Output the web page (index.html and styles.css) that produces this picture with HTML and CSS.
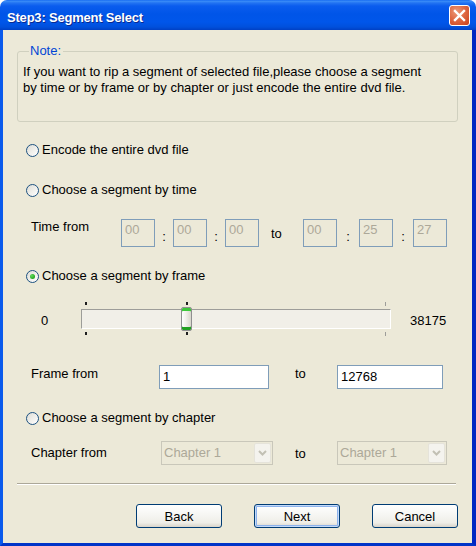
FILE: index.html
```html
<!DOCTYPE html>
<html>
<head>
<meta charset="utf-8">
<link rel="stylesheet" href="styles.css">
</head>
<body>
<div class="window">
  <div class="titlebar">
    <span class="title">Step3: Segment Select</span>
    <span class="close">
      <svg width="21" height="21" viewBox="0 0 21 21"><path d="M6 6 L15 15 M15 6 L6 15" stroke="#fff" stroke-width="2.4" stroke-linecap="square"/></svg>
    </span>
  </div>
  <div class="frame">
    <div class="content">
      <fieldset class="note">
        <legend>Note:</legend>
        <p>If you want to rip a segment of selected file,please choose a segment<br>by time or by frame or by chapter or just encode the entire dvd file.</p>
      </fieldset>

      <label class="radio r1"><span class="circle"></span>Encode the entire dvd file</label>
      <label class="radio r2"><span class="circle"></span>Choose a segment by time</label>

      <div class="time-row">
        <span class="lbl lbl-time">Time from</span>
        <span class="tbox">00</span><span class="colon c1">:</span>
        <span class="tbox">00</span><span class="colon c2">:</span>
        <span class="tbox">00</span><span class="to to-time">to</span>
        <span class="tbox">00</span><span class="colon c3">:</span>
        <span class="tbox">25</span><span class="colon c4">:</span>
        <span class="tbox">27</span>
      </div>

      <label class="radio r3"><span class="circle checked"></span>Choose a segment by frame</label>

      <div class="slider-row">
        <span class="min">0</span>
        <div class="slider">
          <div class="track"></div>
          <span class="tick dark top" style="left:4px"></span>
          <span class="tick dark bottom" style="left:4px"></span>
          <span class="tick dark top" style="left:105px"></span>
          <span class="tick dark bottom" style="left:105px"></span>
          <span class="tick gray top" style="left:304px"></span>
          <span class="tick gray bottom" style="left:304px"></span>
          <div class="thumb"></div>
        </div>
        <span class="max">38175</span>
      </div>

      <div class="frame-row">
        <span class="lbl lbl-frame">Frame from</span>
        <span class="input in1">1</span>
        <span class="to to-frame">to</span>
        <span class="input in2">12768</span>
      </div>

      <label class="radio r4"><span class="circle"></span>Choose a segment by chapter</label>

      <div class="chapter-row">
        <span class="lbl lbl-chapter">Chapter from</span>
        <span class="select s1"><span class="sel-text">Chapter 1</span><span class="arrow"><svg width="9" height="6" viewBox="0 0 9 6"><path d="M1 1 L4.5 4.5 L8 1" fill="none" stroke="#C2C0B4" stroke-width="2"/></svg></span></span>
        <span class="to to-chapter">to</span>
        <span class="select s2"><span class="sel-text">Chapter 1</span><span class="arrow"><svg width="9" height="6" viewBox="0 0 9 6"><path d="M1 1 L4.5 4.5 L8 1" fill="none" stroke="#C2C0B4" stroke-width="2"/></svg></span></span>
      </div>

      <div class="separator"></div>

      <div class="buttons">
        <button class="btn">Back</button>
        <button class="btn default">Next</button>
        <button class="btn">Cancel</button>
      </div>
    </div>
  </div>
</div>
</body>
</html>
```

FILE: styles.css
```css
html, body {
  margin: 0;
  padding: 0;
}
body {
  width: 476px;
  height: 546px;
  overflow: hidden;
  background: #ffffff;
  font-family: "Liberation Sans", Arial, sans-serif;
  font-size: 13px;
  color: #000;
}
.window {
  width: 476px;
  height: 546px;
  display: flex;
  flex-direction: column;
}
.titlebar {
  height: 30px;
  flex: none;
  display: flex;
  align-items: flex-start;
  justify-content: space-between;
  padding: 0 6px 0 7px;
  box-sizing: border-box;
  border-radius: 7px 7px 0 0;
  background: linear-gradient(to bottom, #0A5FEF 0px, #3D8FF8 1px, #2273F2 3px, #0A5CEE 6px, #0055E8 14px, #0056EA 22px, #0050DC 27px, #0040C4 30px);
}
.title {
  margin-top: 10px;
  line-height: 16px;
  color: #fff;
  font-weight: bold;
  font-size: 13px;
  letter-spacing: -0.2px;
  text-shadow: 1px 1px 0 #0A2A8F;
}
.close {
  margin-top: 5px;
  width: 21px;
  height: 21px;
  box-sizing: border-box;
  border: 1px solid #fff;
  border-radius: 3px;
  background: radial-gradient(circle at 35% 30%, #EC9A7A 0%, #DF6A45 45%, #C9401A 100%);
  display: flex;
}
.close svg {
  margin: -1px;
}
.frame {
  flex: 1;
  border-left: 3px solid #0A5AEC;
  border-right: 4px solid #0026C2;
  border-bottom: 3px solid #0034C8;
  background: #ECE9D8;
}
.content {
  display: flex;
  flex-direction: column;
  padding: 0 14px;
}

/* Note group */
.note {
  margin: 14px 0 0 0;
  padding: 6px 0 25px 5px;
  border: 1px solid #D0D0BF;
  border-radius: 3px;
  min-width: 0;
}
.note legend {
  margin-left: 6px;
  padding: 0 2px 0 1px;
  line-height: 14px;
  color: #0046D5;
}
.note p {
  margin: 0;
  line-height: 16px;
}

/* Radios */
.radio {
  display: flex;
  align-items: center;
  height: 20px;
  line-height: 16px;
  padding-left: 9px;
}
.r1 { margin-top: 18px; }
.r2 { margin-top: 20px; }
.r3 { margin-top: 19px; }
.r4 { margin-top: 19px; }
.circle {
  width: 13px;
  height: 13px;
  box-sizing: border-box;
  border: 1px solid #1C5180;
  border-radius: 50%;
  margin-right: 3px;
  background: linear-gradient(135deg, #DCDCD6 0%, #EEEDE8 45%, #FFFFFF 100%);
  display: flex;
  align-items: center;
  justify-content: center;
}
.circle.checked::after {
  content: "";
  width: 5px;
  height: 5px;
  border-radius: 50%;
  background: radial-gradient(circle at 35% 35%, #62D95E 0%, #2BAF28 60%, #1E8C1E 100%);
}

/* Labels */
.lbl {
  line-height: 16px;
  flex: none;
}
.to {
  line-height: 16px;
  flex: none;
  box-sizing: border-box;
}

/* Time row */
.time-row {
  display: flex;
  align-items: flex-start;
  height: 28px;
  margin-top: 19px;
  padding-left: 14px;
}
.lbl-time { width: 90px; }
.tbox {
  width: 34px;
  height: 28px;
  box-sizing: border-box;
  border: 1px solid #7F9DB9;
  padding: 2px 0 0 3px;
  line-height: 16px;
  color: #ACA899;
  flex: none;
}
.colon {
  line-height: 16px;
  margin-top: 10px;
  text-align: center;
  flex: none;
}
.c1 { width: 18px; }
.c2 { width: 18px; }
.c3 { width: 22px; }
.c4 { width: 20px; }
.to-time {
  width: 44px;
  padding-left: 12px;
  margin-top: 7px;
}

/* Slider */
.slider-row {
  display: flex;
  align-items: flex-start;
  height: 35px;
  margin-top: 15px;
  padding-left: 24px;
}
.min {
  width: 40px;
  line-height: 16px;
  margin-top: 12px;
  flex: none;
}
.max {
  margin-left: 19px;
  line-height: 16px;
  margin-top: 12px;
}
.slider {
  position: relative;
  width: 310px;
  height: 35px;
  flex: none;
}
.track {
  margin-top: 8px;
  height: 20px;
  box-sizing: border-box;
  border-top: 1px solid #9D9D99;
  border-left: 1px solid #9D9D99;
  border-bottom: 1px solid #FFFFFF;
  border-right: 1px solid #FFFFFF;
  background: #F1EFE8;
}
.tick {
  position: absolute;
  width: 2px;
  height: 3px;
}
.tick.top { top: 1px; }
.tick.bottom { top: 31px; }
.tick.dark { background: #1E1E1E; }
.tick.gray { width: 1px; height: 4px; background: #9D9D99; }
.tick.gray.top { top: 1px; }
.thumb {
  position: absolute;
  left: 100px;
  top: 6px;
  width: 11px;
  height: 24px;
  box-sizing: border-box;
  border: 1px solid #8E8F8F;
  border-radius: 2px;
  background: linear-gradient(to right, #FFFFFF 0%, #F3F2EC 40%, #D8D6CC 100%);
  box-shadow: inset 0 3px 0 #3DC93A, inset 0 -3px 0 #21A121;
}

/* Frame row */
.frame-row {
  display: flex;
  align-items: flex-start;
  height: 24px;
  margin-top: 29px;
  padding-left: 14px;
}
.lbl-frame { width: 128px; margin-top: 1px; }
.input {
  height: 24px;
  box-sizing: border-box;
  border: 1px solid #7F9DB9;
  background: #fff;
  padding: 3px 0 0 3px;
  line-height: 16px;
  flex: none;
}
.in1 { width: 110px; }
.in2 { width: 106px; }
.to-frame {
  width: 68px;
  padding-left: 26px;
  margin-top: 1px;
}

/* Chapter row */
.chapter-row {
  display: flex;
  align-items: flex-start;
  height: 24px;
  margin-top: 13px;
  padding-left: 14px;
}
.lbl-chapter { width: 130px; margin-top: 4px; }
.select {
  height: 24px;
  box-sizing: border-box;
  border: 1px solid #C9C7BA;
  display: flex;
  align-items: flex-start;
  justify-content: space-between;
  flex: none;
}
.s1 { width: 112px; }
.s2 { width: 110px; }
.sel-text {
  color: #ACA899;
  line-height: 16px;
  padding: 3px 0 0 2px;
}
.arrow {
  width: 17px;
  height: 20px;
  margin: 1px;
  box-sizing: border-box;
  border: 1px solid #E5E3DA;
  border-radius: 2px;
  background: #F4F3EE;
  display: flex;
  align-items: center;
  justify-content: center;
}
.to-chapter {
  width: 64px;
  padding-left: 22px;
  margin-top: 5px;
}

/* Separator and buttons */
.separator {
  margin-top: 18px;
  margin-right: 2px;
  border-top: 1px solid #ACA899;
  border-bottom: 1px solid #FFFFFF;
}
.buttons {
  display: flex;
  justify-content: flex-end;
  gap: 32px;
  margin-top: 19px;
}
.btn {
  width: 86px;
  height: 24px;
  box-sizing: border-box;
  border: 1px solid #003C74;
  border-radius: 3px;
  padding: 0;
  font-family: "Liberation Sans", Arial, sans-serif;
  font-size: 13px;
  color: #000;
  background: linear-gradient(to bottom, #FFFFFF 0%, #F7F7F4 40%, #EFEEE8 80%, #D9D4CA 100%);
}
.btn.default {
  box-shadow: inset 0 0 0 1px #C4DAF8, inset 0 0 0 2px #8CB2EC;
}
```
